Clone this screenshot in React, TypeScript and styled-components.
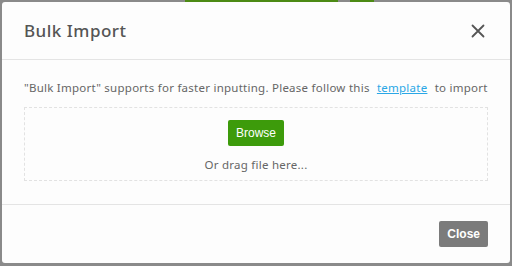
import React from 'react';
import styled, { createGlobalStyle } from 'styled-components';

const GlobalStyle = createGlobalStyle`
  html, body {
    margin: 0;
    padding: 0;
    width: 512px;
    height: 266px;
    overflow: hidden;
    background: #8a8a8a;
  }
  * { box-sizing: border-box; }
`;

const Page = styled.div`
  position: relative;
  width: 512px;
  height: 266px;
  background: #8a8a8a;
`;

const Shade = styled.div<{ $left: number; $width: number; $color: string }>`
  position: absolute;
  top: 0;
  left: ${p => p.$left}px;
  width: ${p => p.$width}px;
  height: 4px;
  background: ${p => p.$color};
`;

const Modal = styled.div`
  position: absolute;
  top: 2px;
  left: 2px;
  width: 508px;
  height: 261px;
  background: #fdfdfd;
  border-radius: 3px;
  display: flex;
  flex-direction: column;
  font-family: "Noto Sans", sans-serif;
`;

const Header = styled.div`
  height: 58px;
  padding: 0 22px;
  display: flex;
  align-items: center;
  justify-content: space-between;
  border-bottom: 1px solid #e4e4e4;
`;

const Title = styled.h2`
  margin: 0;
  font-size: 17px;
  font-weight: 500;
  color: #555;
  letter-spacing: 0.5px;
`;

const CloseIcon = styled.button`
  border: 0;
  background: none;
  padding: 0;
  width: 14px;
  height: 14px;
  margin-right: 3px;
  display: flex;
  cursor: pointer;
`;

const Body = styled.div`
  flex: 1;
  padding: 20px 22px 0;
  display: flex;
  flex-direction: column;
  border-bottom: 1px solid #e4e4e4;
`;

const Hint = styled.p`
  margin: 0 0 12px;
  font-size: 11.5px;
  line-height: 15px;
  letter-spacing: 0.25px;
  color: #666;
  white-space: nowrap;
`;

const Link = styled.a`
  color: #2aa7e6;
  text-decoration: underline;
  margin: 0 4px;
`;

const DropZone = styled.div`
  height: 74px;
  border: 1px dashed #e2e2e2;
  display: flex;
  flex-direction: column;
  align-items: center;
  padding-top: 12px;
  gap: 11px;
`;

const Button = styled.button<{ $tone: 'green' | 'gray' }>`
  border: 0;
  border-radius: 2px;
  height: 26px;
  padding: 0 ${p => (p.$tone === 'green' ? 8 : 8)}px;
  background: ${p => (p.$tone === 'green' ? '#3d9b0b' : '#7b7b7b')};
  color: #fff;
  font-family: "Liberation Sans", Arial, sans-serif;
  font-size: 12px;
  font-weight: ${p => (p.$tone === 'green' ? 400 : 700)};
  cursor: pointer;
`;

const DragText = styled.span`
  font-size: 11.5px;
  letter-spacing: 0.25px;
  color: #666;
`;

const Footer = styled.div`
  height: 58px;
  padding: 0 22px;
  display: flex;
  align-items: center;
  justify-content: flex-end;
`;

export default function App() {
  return (
    <Page>
      <GlobalStyle />
      <Shade $left={185} $width={153} $color="#4c8a14" />
      <Shade $left={350} $width={24} $color="#4c8a14" />
      <Modal>
        <Header>
          <Title>Bulk Import</Title>
          <CloseIcon aria-label="close">
            <svg width="14" height="14" viewBox="0 0 14 14">
              <path d="M1.5 1.5 L12.5 12.5 M12.5 1.5 L1.5 12.5" stroke="#555" strokeWidth="1.8" strokeLinecap="round" />
            </svg>
          </CloseIcon>
        </Header>
        <Body>
          <Hint>
            "Bulk Import" supports for faster inputting. Please follow this <Link href="#">template</Link> to import
          </Hint>
          <DropZone>
            <Button $tone="green">Browse</Button>
            <DragText>Or drag file here...</DragText>
          </DropZone>
        </Body>
        <Footer>
          <Button $tone="gray">Close</Button>
        </Footer>
      </Modal>
    </Page>
  );
}
